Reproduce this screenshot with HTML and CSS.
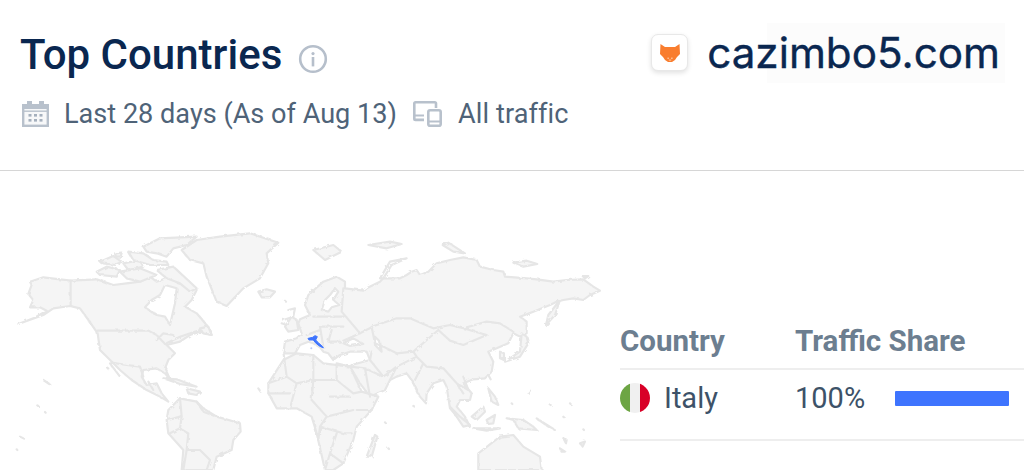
FILE: index.html
```html
<!DOCTYPE html>
<html lang="en">
<head>
<meta charset="utf-8">
<title>Top Countries</title>
<link rel="stylesheet" href="styles.css">
</head>
<body>
<header class="header">
  <div class="header-top">
    <div class="title-group">
      <h1 class="title">Top Countries</h1>
      <svg class="info-icon" viewBox="0 0 30 30"><circle cx="15" cy="15" r="12.8" fill="none" stroke="#b6bfcb" stroke-width="2.6"/><circle cx="15" cy="9.6" r="1.6" fill="#b6bfcb"/><rect x="13.7" y="13" width="2.6" height="9.4" fill="#b6bfcb"/></svg>
    </div>
    <div class="site">
      <span class="site-icon">
        <svg class="fox" viewBox="0 0 20 18"><path d="M0.500 0 L5 3 H15 L19.500 0 L20 10 L17 13 L15 16 L12 18 H8 L5 16 L3 13 L0 10 Z" fill="#f97d2e"/><rect x="7.400" y="13.600" width="1.500" height="1.300" fill="#fcc9a2"/><rect x="11.100" y="13.600" width="1.500" height="1.300" fill="#fcc9a2"/><rect x="8.800" y="15.600" width="2.400" height="1" fill="#fcc9a2"/></svg>
      </span>
      <span class="domain">cazimbo5.com</span>
    </div>
  </div>
  <div class="meta">
    <svg class="cal-icon" viewBox="0 0 27 26"><rect x="1.2" y="4.2" width="24.6" height="20.6" fill="#f7f8f9" stroke="#b8c1cc" stroke-width="2.4"/><rect x="1" y="4" width="25" height="4" fill="#b8c1cc"/><rect x="1" y="9.5" width="25" height="1.4" fill="#b8c1cc"/><rect x="5" y="0" width="5" height="5" fill="#b8c1cc"/><rect x="17" y="0" width="5" height="5" fill="#b8c1cc"/><g fill="#a5b0bd"><rect x="6.5" y="13" width="3" height="2.6"/><rect x="12" y="13" width="3" height="2.6"/><rect x="17.5" y="13" width="3" height="2.6"/><rect x="6.5" y="18" width="3" height="2.6"/><rect x="12" y="18" width="3" height="2.6"/><rect x="17.5" y="18" width="3" height="2.6"/></g></svg>
    <span class="meta-text">Last 28 days (As of Aug 13)</span>
    <svg class="dev-icon" viewBox="0 0 29 26"><path d="M23 7V2.5Q23 1.3 21.800 1.300H2.500Q1.300 1.300 1.300 2.500V17.700Q1.300 18.900 2.500 18.900H11" fill="none" stroke="#b8c1cc" stroke-width="2.6"/><path d="M1.300 14.500H11" stroke="#b8c1cc" stroke-width="2"/><rect x="15.300" y="9.300" width="12.400" height="15.400" rx="1.800" fill="none" stroke="#b8c1cc" stroke-width="2.600"/><path d="M15.300 20.500H27.700" stroke="#b8c1cc" stroke-width="2"/></svg>
    <span class="meta-text wide">All traffic</span>
  </div>
</header>
<main class="main">
  <svg class="map" viewBox="0 171 620 299">
    <defs>
      <filter id="rough" filterUnits="userSpaceOnUse" x="0" y="171" width="620" height="299">
        <feTurbulence type="fractalNoise" baseFrequency=".22" numOctaves="2" seed="4" result="n"/>
        <feDisplacementMap in="SourceGraphic" in2="n" scale="3" result="d"/>
        <feGaussianBlur in="d" stdDeviation=".35"/>
      </filter>
    </defs>
    <g filter="url(#rough)">
    <g transform="translate(0 220) scale(.3333)" class="land">
      <path d="M55 312 100 295 140 272 120 262 90 262 100 240 85 222 95 195 90 185 130 172 212 182 290 178 340 195 380 190 420 185 450 170 470 185 510 170 535 190 560 195 590 210 575 240 555 260 590 280 620 315 635 345 600 335 570 345 540 365 500 375 525 400 505 420 495 445 510 478 495 460 470 445 430 450 425 470 440 495 470 490 485 520 505 545 480 530 440 510 395 480 360 450 340 430 300 390 293 340 265 300 240 265 210 258 160 265 130 285Z"/>
      <path class="water" d="M435 262 455 240 480 225 495 195 530 205 525 250 510 315 495 290 470 285Z"/>
      <path d="M300 125 340 108 365 125 345 135 310 130Z"/>
      <path d="M345 100 365 98 362 110 348 110Z"/>
      <path d="M290 155 320 140 360 150 350 170 300 165Z"/>
      <path d="M370 130 420 120 430 140 385 150Z"/>
      <path d="M385 95 430 100 460 120 500 125 505 135 450 135 400 120Z"/>
      <path d="M430 80 480 55 590 50 560 75 520 85 500 110 470 100 440 95Z"/>
      <path d="M470 150 520 140 590 205 570 215 540 190 500 175Z"/>
      <path d="M360 155 420 145 470 165 420 185 380 175Z"/>
      <path d="M545 90 590 60 660 50 750 40 835 68 800 100 805 130 780 175 730 205 680 258 650 245 620 170 610 130 570 120Z"/>
      <path d="M775 215 800 208 825 215 810 232 785 232Z"/>
      <path d="M600 325 625 320 635 345 610 340Z"/>
      <path d="M500 600 505 570 540 535 590 545 610 565 650 590 720 610 722 635 700 660 695 690 650 710 640 750 545 750 550 690 505 640Z"/>
      <path d="M490 475 530 478 590 500 540 492Z"/>
      <path d="M560 505 600 515 590 525 565 520Z"/>
      <path class="line" d="M212 182V258M293 332H445L470 345 495 372 540 350 600 330M335 428 380 435 420 440 430 470M330 430 360 470M445 485 460 510M540 535 545 590 540 625 565 640 560 690 600 690 630 720 620 750M590 545 610 575 650 590M505 600 540 590M510 640 540 625M560 690 550 750M470 360 490 340 520 345"/>
      <path class="line" d="M130 480 148 492M320 442 325 445M112 556 115 558M135 576 137 578M60 650 72 656M50 688 52 690M775 505 782 515M855 242 858 245"/>
      <path class="line" d="M850 300 880 290 885 265 865 270M845 310 875 320"/>
    </g>
    <g transform="translate(300 220) scale(.3333)" class="land">
      <path d="M30 285 15 255 25 225 70 185 110 170 135 185 135 205 190 212 200 205 240 185 250 175 300 175 320 165 335 155 350 150 360 165 385 155 410 130 450 120 490 112 530 120 540 140 580 150 610 155 615 170 680 175 710 178 760 185 800 180 850 178 880 200 900 212 870 225 850 240 820 235 790 240 770 245 750 255 700 275 660 290 680 305 680 340 660 350 640 340 625 370 590 385 565 395 580 425 575 455 555 475 520 478 490 490 515 520 510 540 480 540 470 560 495 590 510 620 480 600 450 565 440 500 430 480 400 490 380 520 378 550 360 530 335 480 320 460 290 470 270 480 255 510 210 530 180 490 150 440 155 435 210 420 200 395 150 395 120 405 100 420 85 400 70 395 60 382 40 370 25 365 0 375 -15 400 -50 400 -45 365 -10 355 5 340 -5 310 0 298Z"/>
      <path class="water" d="M65 270 75 240 90 225 105 205 115 215 100 240 118 255 95 262 85 275Z"/>
      <path class="water" d="M130 370 160 355 190 372 150 378Z"/>
      <path class="water" d="M225 350 240 365 245 395 225 375Z"/>
      <path d="M-95 490 -50 420 -10 400 40 405 70 430 150 440 185 515 235 530 215 570 170 620 160 660 130 730 100 750 75 750 50 640 35 590 -10 565 -70 565 -95 520Z"/>
      <path class="line" d="M130 205 125 275 180 340M215 320 290 295 330 295 400 325 450 315 490 325 560 305 600 310 640 335M415 330 450 362 490 375 560 345 490 325M225 370 215 322 180 340 130 362M40 290 70 290 130 290M60 320 130 320M60 320 70 380M95 330 85 365 120 365M20 345 60 330M210 420 250 470 290 440 350 410 380 440 430 445 470 490 490 520M350 410 340 395 290 400 250 380 225 370M340 490 370 430M290 440 270 480M340 395 415 330M210 420 215 395M150 440 195 445 250 470M195 445 210 530M-50 395 -40 470 -10 490 40 480 40 405M40 480 110 480 110 430M110 480 160 520 185 515M40 480 35 540 80 590 160 570M-10 490 -30 565M-95 490 -40 470M-95 520 -30 520M80 590 60 620 130 640 155 640M110 640 90 700 130 730M150 440 110 430M170 570 215 570M60 620 55 660M90 700 75 750M470 490 505 510 490 470M90 530 150 530"/>
      <path d="M200 710 225 645 232 650 215 710Z"/>
      <path d="M535 700 600 650 640 645 670 680 720 710 725 750 535 750Z"/>
      <path d="M615 425 660 395 665 340 680 350 685 370 660 410Z"/>
      <path d="M738 315 745 285 780 240 765 285Z"/>
      <path d="M450 560 480 590 510 615 490 620Z"/>
      <path d="M520 625 600 625 560 632Z"/>
      <path d="M515 590 550 560 555 575 530 600Z"/>
      <path d="M560 600 585 585 580 610 565 612Z"/>
      <path d="M565 505 585 530 595 555 575 545Z"/>
      <path d="M620 595 640 600 655 625 710 630 700 620 670 600Z"/>
      <path d="M710 595 765 630 745 620Z"/>
      <path d="M40 90 100 75 125 95 75 120Z"/>
      <path d="M205 75 270 65 305 72 260 85Z"/>
      <path d="M428 75 445 68 495 100 460 95Z"/>
      <path d="M640 128 680 122 712 132 670 140Z"/>
      <path class="water" d="M240 175 270 125 320 115 275 135 250 175Z"/>
      <path d="M-45 320 -25 290 -10 300 -5 330 -35 335Z"/>
      <path d="M600 395 612 400 612 420 600 415Z"/>
      <path d="M790 655 800 660 798 670Z"/>
      <path d="M780 685 795 695 785 695Z"/>
      <path d="M840 670 855 665 848 680Z"/>
      <path d="M848 168 865 168 855 175Z"/>
      <path class="line" d="M685 518 690 512M635 550 637 552M750 553 752 555M810 550 812 552M790 590 792 592M850 628 852 630M265 685 267 687M255 607 257 609M340 558 344 560M565 465 572 478"/>
    </g>
    </g>
    <g transform="translate(300 220) scale(.3333)" class="land">
      <path class="italy" d="M25 355 38 352 45 347 52 350 47 360 55 368 68 380 70 384 58 378 46 368 40 360 28 360Z"/>
      <circle cx="34" cy="385" r="3" fill="#b9c8f7"/>
    </g>
  </svg>
  <section class="share">
    <div class="share-head"><span class="col-name">Country</span><span class="col-share">Traffic Share</span></div>
    <div class="share-row">
      <span class="col-name country">
        <svg class="flag" viewBox="0 0 30 30"><defs><clipPath id="flag-round"><circle cx="15" cy="15" r="15"/></clipPath></defs><g clip-path="url(#flag-round)"><rect width="10" height="30" fill="#6da544"/><rect x="10" width="10" height="30" fill="#f0f0f0"/><rect x="20" width="10" height="30" fill="#d80027"/></g></svg>
        Italy
      </span>
      <span class="col-share pct"><span class="pct-text">100%</span><span class="bar"></span></span>
    </div>
  </section>
</main>
</body>
</html>
```

FILE: styles.css
```css
* { box-sizing: border-box; }
html, body { margin: 0; padding: 0; background: #fff; }
body { width: 1024px; height: 470px; overflow: hidden; font-family: Roboto, "Liberation Sans", sans-serif; color: #0a2750; }
.header { height: 171px; padding: 20px 19px 0 20px; border-bottom: 1px solid #d6d6d6; display: flex; flex-direction: column; }
.header-top { display: flex; justify-content: space-between; align-items: center; height: 70px; }
.title-group { display: flex; align-items: center; gap: 16px; }
.title { margin: 0; font-size: 42px; font-weight: 500; line-height: 70px; color: #0a2750; }
.info-icon { width: 30px; height: 30px; margin-top: 8px; }
.site { display: flex; align-items: center; gap: 19px; margin-top: -5px; }
.site-icon { width: 37px; height: 37px; border: 1px solid #e8e8e8; border-radius: 7px; background: #fff; box-shadow: 0 2px 5px rgba(0,0,0,.12); display: flex; align-items: center; justify-content: center; }
.fox { width: 20px; height: 18px; }
.domain { font-family: Inter, sans-serif; font-size: 42.2px; line-height: 60px; color: #0a2750; -webkit-text-stroke: .4px #0a2750; background: linear-gradient(90deg, #fff 60px, #fcfcfc 60px); padding-right: 5px; }
.meta { display: flex; align-items: center; margin-top: 9px; height: 30px; padding-left: 2px; }
.cal-icon { width: 27px; height: 26px; }
.meta-text { font-size: 27.1px; color: #4f6378; }
.meta-text.wide { letter-spacing: .1px; }
.cal-icon + .meta-text { margin-left: 15px; }
.dev-icon { width: 29px; height: 26px; margin: 0 16px; }
.main { display: flex; height: 299px; }
.map { width: 620px; height: 299px; flex: none; display: block; }
.land path { fill: #f5f5f5; stroke: #e6e6e6; stroke-width: 6.5; stroke-linejoin: round; stroke-linecap: round; }
.land path.water { fill: #fff; }
.land path.line { fill: none; }
.land path.italy { fill: #3e74fe; stroke: #3e74fe; stroke-width: 3; }
.share { flex: 1; padding-top: 147px; }
.share-head { display: flex; align-items: center; height: 52px; padding-bottom: 4px; border-bottom: 2px solid #eee; font-size: 29.5px; font-weight: 700; color: #6c7e90; }
.col-name { width: 175px; flex: none; }
.col-share { flex: 1; }
.share-row { display: flex; align-items: center; height: 71px; border-bottom: 2px solid #eee; font-size: 29px; color: #3d5268; padding-bottom: 13px; }
.country { display: flex; align-items: center; gap: 14px; }
.flag { width: 30px; height: 30px; }
.pct { display: flex; align-items: center; }
.pct-text { width: 100px; }
.bar { width: 114px; height: 15px; background: #3e74fe; border-radius: 1px; }
```
